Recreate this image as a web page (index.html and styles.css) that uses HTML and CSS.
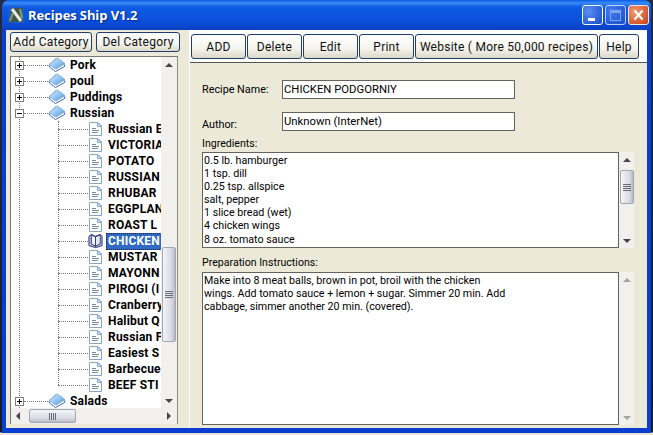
FILE: index.html
```html
<!DOCTYPE html>
<html>
<head>
<meta charset="utf-8">
<title>Recipes Ship V1.2</title>
<link rel="stylesheet" href="styles.css">
</head>
<body>
<svg class="defs" width="0" height="0">
  <defs>
    <linearGradient id="bk" x1="0" y1="0" x2="1" y2="1"><stop offset="0" stop-color="#e2f1fc"/><stop offset=".55" stop-color="#8fc2f0"/><stop offset="1" stop-color="#3d86dc"/></linearGradient>
    <symbol id="book" viewBox="0 0 18 16">
      <path d="M1 8 7.500 14.500 17 9.500V8L8 1Z" fill="#6fa3de"/>
      <path d="M1.500 8.500 7.500 13 16 8.500" fill="none" stroke="#fff" stroke-width="2"/>
      <path d="M1 7.500 9.500 1 17 6.500 8 12Z" fill="url(#bk)" stroke="#7ba6d8" stroke-width=".8"/>
      <path d="M1 8 1.500 10 7.500 14.500 16.500 9.500 17 7.500" fill="none" stroke="#4a70ad"/>
    </symbol>
    <symbol id="doc" viewBox="0 0 15 16">
      <path d="M1.500 1.500H10L13.500 5V14.500H1.500Z" fill="#fff" stroke="#87a5d3"/>
      <path d="M9.500 1.500V5.500H13.500Z" fill="#d3e1f5" stroke="#87a5d3"/>
      <path d="M4 7.500H8M4 9.500H11M4 11.500H10" stroke="#7d8ba3"/>
    </symbol>
    <symbol id="open" viewBox="0 0 16 16">
      <path d="M1 3 3.500 1 8 3 13 1 15 3V13L8 15 1 13Z" fill="#b9c5e6" stroke="#2a2c6e"/>
      <path d="M3.500 1.500V11L8 13.500 13 11V1.500L8 3.500Z" fill="#f2f5fb" stroke="#2a2c6e"/>
      <path d="M8 3.500V14" stroke="#2a2c6e"/>
      <path d="M9 5 12 3.500V10.500L9 12Z" fill="#dde6f6"/>
    </symbol>
  </defs>
</svg>
<div class="window">
  <header class="titlebar">
    <svg class="appicon" viewBox="0 0 16 16"><rect width="16" height="16" fill="#1a5ec8"/><path d="M1 15 4 1H14L15 15Z" fill="#46524c"/><path d="M4 2 13 14" stroke="#e6ece2" stroke-width="3"/><path d="M2 14 5 6M12 2 14 11" stroke="#7fa56e" stroke-width="2"/></svg>
    <span class="apptitle">Recipes Ship V1.2</span>
    <div class="winbtns">
      <span class="winbtn min"><i></i></span>
      <span class="winbtn max"><i></i></span>
      <span class="winbtn close"><svg viewBox="0 0 21 20"><path d="M6 5 15 15M15 5 6 15" stroke="#fff" stroke-width="2.400"/></svg></span>
    </div>
  </header>
  <div class="client">
    <aside class="left">
      <div class="catbtns">
        <button class="btn addcat">Add Category</button>
        <button class="btn delcat">Del Category</button>
      </div>
      <div class="treebox">
        <div class="treemain">
          <div class="tree">
            <div class="row cat"><span class="exp plus"></span><span class="hdots"></span><svg class="book"><use href="#book"/></svg><span class="lbl">Pork</span></div>
            <div class="row cat"><span class="exp plus"></span><span class="hdots"></span><svg class="book"><use href="#book"/></svg><span class="lbl">poul</span></div>
            <div class="row cat"><span class="exp plus"></span><span class="hdots"></span><svg class="book"><use href="#book"/></svg><span class="lbl">Puddings</span></div>
            <div class="row cat"><span class="exp minus"></span><span class="hdots"></span><svg class="book"><use href="#book"/></svg><span class="lbl">Russian</span></div>
            <div class="kids">
              <div class="row rec"><span class="hdots2"></span><svg class="doc"><use href="#doc"/></svg><span class="lbl">Russian E</span></div>
              <div class="row rec"><span class="hdots2"></span><svg class="doc"><use href="#doc"/></svg><span class="lbl">VICTORIA</span></div>
              <div class="row rec"><span class="hdots2"></span><svg class="doc"><use href="#doc"/></svg><span class="lbl">POTATO</span></div>
              <div class="row rec"><span class="hdots2"></span><svg class="doc"><use href="#doc"/></svg><span class="lbl">RUSSIAN</span></div>
              <div class="row rec"><span class="hdots2"></span><svg class="doc"><use href="#doc"/></svg><span class="lbl">RHUBAR</span></div>
              <div class="row rec"><span class="hdots2"></span><svg class="doc"><use href="#doc"/></svg><span class="lbl">EGGPLAN</span></div>
              <div class="row rec"><span class="hdots2"></span><svg class="doc"><use href="#doc"/></svg><span class="lbl">ROAST L</span></div>
              <div class="row rec"><span class="hdots2"></span><svg class="doc"><use href="#open"/></svg><span class="lbl sel">CHICKEN</span></div>
              <div class="row rec"><span class="hdots2"></span><svg class="doc"><use href="#doc"/></svg><span class="lbl">MUSTAR</span></div>
              <div class="row rec"><span class="hdots2"></span><svg class="doc"><use href="#doc"/></svg><span class="lbl">MAYONN</span></div>
              <div class="row rec"><span class="hdots2"></span><svg class="doc"><use href="#doc"/></svg><span class="lbl">PIROGI (I</span></div>
              <div class="row rec"><span class="hdots2"></span><svg class="doc"><use href="#doc"/></svg><span class="lbl">Cranberry</span></div>
              <div class="row rec"><span class="hdots2"></span><svg class="doc"><use href="#doc"/></svg><span class="lbl">Halibut Q</span></div>
              <div class="row rec"><span class="hdots2"></span><svg class="doc"><use href="#doc"/></svg><span class="lbl">Russian F</span></div>
              <div class="row rec"><span class="hdots2"></span><svg class="doc"><use href="#doc"/></svg><span class="lbl">Easiest S</span></div>
              <div class="row rec"><span class="hdots2"></span><svg class="doc"><use href="#doc"/></svg><span class="lbl">Barbecue</span></div>
              <div class="row rec"><span class="hdots2"></span><svg class="doc"><use href="#doc"/></svg><span class="lbl">BEEF STI</span></div>
            </div>
            <div class="row cat"><span class="exp plus"></span><span class="hdots"></span><svg class="book"><use href="#book"/></svg><span class="lbl">Salads</span></div>
          </div>
          <div class="sb v treesb">
            <span class="arrow up"></span>
            <div class="track"><div class="thumb tthumb"><i></i></div></div>
            <span class="arrow down"></span>
          </div>
        </div>
        <div class="hsb">
          <span class="arrow left-a"></span>
          <div class="htrack"><div class="hthumb"><i></i></div></div>
          <span class="arrow right-a"></span>
        </div>
      </div>
    </aside>
    <main class="right">
      <nav class="toolbar">
        <button class="btn t-add">ADD</button>
        <button class="btn t-del">Delete</button>
        <button class="btn t-edit">Edit</button>
        <button class="btn t-print">Print</button>
        <button class="btn t-web">Website ( More 50,000 recipes)</button>
        <button class="btn t-help">Help</button>
      </nav>
      <section class="form">
        <div class="field f-name"><label>Recipe Name:</label><div class="input">CHICKEN PODGORNIY</div></div>
        <div class="field f-author"><label>Author:</label><div class="input">Unknown (InterNet)</div></div>
        <div class="cap c-ing">Ingredients:</div>
        <div class="memo m-ing">
          <div class="memotext">0.5 lb. hamburger<br>1 tsp. dill<br>0.25 tsp. allspice<br>salt, pepper<br>1 slice bread (wet)<br>4 chicken wings<br>8 oz. tomato sauce</div>
          <div class="sb v">
            <span class="arrow up"></span>
            <div class="track"><div class="thumb ithumb"><i></i></div></div>
            <span class="arrow down"></span>
          </div>
        </div>
        <div class="cap c-prep">Preparation Instructions:</div>
        <div class="memo m-prep">
          <div class="memotext">Make into 8 meat balls, brown in pot, broil with the chicken<br>wings. Add tomato sauce + lemon + sugar. Simmer 20 min. Add<br>cabbage, simmer another 20 min. (covered).</div>
          <div class="sb v dis">
            <span class="arrow up"></span>
            <div class="track"></div>
            <span class="arrow down"></span>
          </div>
        </div>
      </section>
    </main>
  </div>
</div>
</body>
</html>
```
FILE: styles.css
```css
* { box-sizing: border-box; }
html, body { margin: 0; padding: 0; }
body {
  width: 653px;
  height: 435px;
  overflow: hidden;
  background: linear-gradient(#232c40, #141a26 432px, #e8e4dc 433px);
  font-family: Roboto, "Liberation Sans", sans-serif;
  font-size: 11px;
  color: #000;
}
.defs { position: absolute; }

.window {
  width: 649px;
  height: 433px;
  margin-left: 2px;
  display: flex;
  flex-direction: column;
  background: #0a3ed2;
  border-radius: 7px 7px 0 0;
}
.titlebar {
  height: 30px;
  flex: none;
  display: flex;
  align-items: center;
  padding: 0 2px 0 6px;
  background: linear-gradient(#0a5be6 0, #3a8bf5 3px, #0f5ae2 7px, #0a50dc 20px, #0a46cc 27px, #0a3fbe 30px);
  border-radius: 7px 7px 0 0;
}
.appicon { width: 16px; height: 16px; flex: none; }
.apptitle {
  margin-left: 4px;
  color: #fff;
  font: bold 13px "Open Sans", "DejaVu Sans", sans-serif;
  text-shadow: 1px 1px 1px #0a2a80;
  letter-spacing: -0.1px;
}
.winbtns { margin-left: auto; display: flex; gap: 2px; }
.winbtn {
  width: 21px;
  height: 20px;
  display: block;
  position: relative;
  border: 1px solid #fff;
  border-radius: 3px;
  background: radial-gradient(circle at 30% 30%, #5d8ef0, #2a5fd8 70%, #1f4fc0);
}
.winbtn.max { opacity: .72; }
.winbtn.close { background: radial-gradient(circle at 30% 30%, #ee9a70, #d8582f 70%, #b83f1f); border-color: #f4e6de; }
.winbtn.close svg { width: 19px; height: 18px; display: block; }
.min i { display: block; width: 7px; height: 3px; background: #fff; margin: 12px 0 0 5px; }
.max i { display: block; width: 11px; height: 11px; border: 1px solid #a8c2f2; border-top-width: 3px; margin: 4px 0 0 4px; }

.client {
  width: 641px;
  height: 398px;
  margin-left: 4px;
  display: flex;
  background: #ece9d8;
}
.left {
  width: 184px;
  flex: none;
  padding: 2px 0 0 4px;
  border-right: 1px solid #fff;
}
.catbtns { display: flex; gap: 4px; height: 20px; }
.btn {
  display: block;
  margin: 0;
  padding: 0;
  font: 12px Roboto, "Liberation Sans", sans-serif;
  letter-spacing: .25px;
  white-space: nowrap;
  color: #111;
  border: 1px solid #1f3f6a;
  border-radius: 3px;
  background: linear-gradient(#fff, #f4f3ec 60%, #dcd8c8);
}
.addcat { width: 82px; }
.delcat { width: 84px; }

.treebox {
  width: 168px;
  height: 368px;
  margin-top: 4px;
  border: 1px solid #7b7a70;
  border-right-color: #8e8d84;
  background: #fff;
  display: flex;
  flex-direction: column;
}
.treemain { display: flex; height: 351px; }
.tree {
  position: relative;
  width: 151px;
  overflow: hidden;
  background: #fff;
}
.tree::before {
  content: "";
  position: absolute;
  left: 8px;
  top: 0;
  bottom: 0;
  border-left: 1px dotted #777;
}
.row {
  height: 16px;
  display: flex;
  align-items: center;
  white-space: nowrap;
  position: relative;
}
.cat { padding-left: 4px; }
.exp {
  width: 9px;
  height: 9px;
  flex: none;
  position: relative;
  border: 1px solid #808080;
  background: #fff;
}
.exp::before {
  content: "";
  position: absolute;
  left: 1px;
  top: 3px;
  width: 5px;
  height: 1px;
  background: #000;
}
.plus::after {
  content: "";
  position: absolute;
  left: 3px;
  top: 1px;
  width: 1px;
  height: 5px;
  background: #000;
}
.hdots { width: 24px; flex: none; border-top: 1px dotted #777; }
.book { width: 18px; height: 16px; flex: none; }
.lbl {
  font: bold 12px Roboto, "Liberation Sans", sans-serif;
  letter-spacing: .2px;
}
.cat .lbl { margin-left: 4px; }
.kids { position: relative; padding-left: 47px; }
.kids::before {
  content: "";
  position: absolute;
  left: 47px;
  top: 0;
  bottom: 8px;
  border-left: 1px dotted #777;
}
.hdots2 { width: 30px; flex: none; border-top: 1px dotted #777; }
.doc { width: 15px; height: 16px; flex: none; }
.rec .lbl { margin-left: 5px; }
.rec .sel {
  margin-left: 3px;
  padding: 0 1px 0 2px;
  height: 17px;
  line-height: 16px;
  min-width: 56px;
  background: #316ac5;
  color: #fff;
  outline: 1px dotted #223;
  outline-offset: -1px;
}

.sb {
  width: 16px;
  flex: none;
  display: flex;
  flex-direction: column;
  background: #f1f0ec;
}
.arrow {
  flex: none;
  width: 16px;
  height: 16px;
  position: relative;
  display: block;
}
.arrow::after {
  content: "";
  position: absolute;
  left: 4px;
  width: 0;
  height: 0;
  border-left: 4px solid transparent;
  border-right: 4px solid transparent;
}
.up::after { top: 6px; border-bottom: 4px solid #45454d; }
.down::after { top: 7px; border-top: 4px solid #45454d; }
.dis .arrow::after { border-top-color: #a3a69a; border-bottom-color: #a3a69a; }
.track { flex: 1; min-height: 0; padding: 0 1px; }
.thumb {
  width: 14px;
  display: flex;
  align-items: center;
  justify-content: center;
  border: 1px solid #a2a7b8;
  border-radius: 2px;
  background: linear-gradient(90deg, #f4f4f8, #d8d9e2 70%, #b8bac8);
}
.thumb i { display: block; width: 8px; height: 7px; background: repeating-linear-gradient(#6a6a72 0 1px, transparent 1px 2px); }
.tthumb { height: 95px; margin-top: 174px; }
.ithumb { height: 34px; margin-top: 2px; }

.hsb { display: flex; height: 16px; background: #f1f0ec; }
.hsb .arrow { width: 17px; }
.left-a::after {
  left: 5px; top: 4px;
  border: 0;
  border-top: 4px solid transparent;
  border-bottom: 4px solid transparent;
  border-right: 4px solid #45454d;
}
.right-a::after {
  left: 7px; top: 4px;
  border: 0;
  border-top: 4px solid transparent;
  border-bottom: 4px solid transparent;
  border-left: 4px solid #45454d;
}
.htrack { flex: 1; padding-top: 1px; }
.hthumb {
  width: 47px;
  height: 14px;
  margin-left: 1px;
  display: flex;
  align-items: center;
  justify-content: center;
  border: 1px solid #a2a7b8;
  border-radius: 2px;
  background: linear-gradient(#f4f4f8, #d8d9e2 70%, #b8bac8);
}
.hthumb i { display: block; width: 7px; height: 7px; background: repeating-linear-gradient(90deg, #6a6a72 0 1px, transparent 1px 2px); }

.right { flex: 1; display: flex; flex-direction: column; min-width: 0; }
.toolbar {
  height: 33px;
  flex: none;
  display: flex;
  background: #fff;
  border-bottom: 1px solid #555;
  padding: 4px 0 0 1px;
}
.toolbar .btn { height: 25px; margin-right: 1px; }
.t-add { width: 55px; }
.t-del { width: 55px; }
.t-edit { width: 55px; }
.t-print { width: 55px; }
.t-web { width: 183px; }
.t-help { width: 40px; }

.form {
  flex: 1;
  padding: 17px 0 0 12px;
  background: #ece9d8;
}
.field { display: flex; height: 19px; }
.field label { width: 80px; flex: none; font-size: 10.800px; line-height: 19px; }
.f-author { margin-top: 13px; }
.f-author label { padding-top: 3px; }
.input {
  width: 233px;
  height: 19px;
  border: 1px solid #66645a;
  background: #fff;
  padding: 1px 1px;
  font-size: 11.300px;
  line-height: 15px;
}
.cap { font-size: 10.600px; height: 14px; line-height: 14px; }
.c-ing { margin-top: 6px; }
.c-prep { margin-top: 8px; }
.memo { display: flex; width: 432px; margin-top: 1px; }
.m-ing { height: 96px; }
.m-prep { height: 153px; margin-top: 2px; }
.memotext {
  width: 417px;
  border: 1px solid #66645a;
  background: #fff;
  padding: 1px 1px;
  font-size: 10.700px;
  line-height: 13.100px;
}
.memo .sb { width: 15px; margin-left: 0; }
.memo .arrow { width: 15px; }
```
